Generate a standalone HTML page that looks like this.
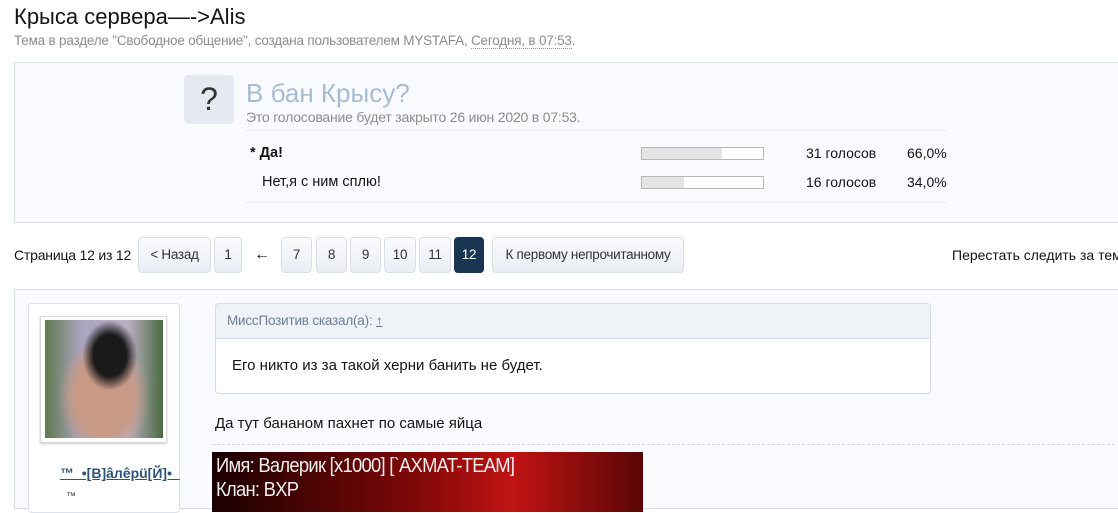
<!DOCTYPE html>
<html><head><meta charset="utf-8"><style>
*{margin:0;padding:0;box-sizing:border-box}
body{width:1118px;height:505px;overflow:hidden;background:#fff;font-family:"Liberation Sans",sans-serif;font-size:13.5px;color:#141414;position:relative}
.a{position:absolute;white-space:nowrap}
.btn{position:absolute;top:237px;height:36px;border:1px solid #d7dfe8;border-radius:4px;background:linear-gradient(#fafbfd,#e9eef4);color:#333;text-align:center;line-height:34px;font-size:13.5px;letter-spacing:-0.3px}
.bar{position:absolute;left:641px;width:123px;height:13px;border:1px solid #b8b8b8;background:#fff}
.bar i{display:block;height:100%;background:#e4e4e4}
</style></head><body>
<div class="a" style="left:14px;top:4px;font-size:22px;color:#141414">Крыса сервера—-&gt;Alis</div>
<div class="a" style="left:14px;top:33px;font-size:13.5px;letter-spacing:-0.2px;color:#8c8c8c">Тема в разделе "Свободное общение", создана пользователем MYSTAFA, <span style="border-bottom:1px dotted #999">Сегодня, в 07:53</span>.</div>

<div class="a" style="left:14px;top:62px;width:1110px;height:161px;background:#f9fafd;border:1px solid #d6dfe9"></div>
<div class="a" style="left:184px;top:75px;width:50px;height:49px;background:#e4e9f2;border-radius:5px;text-align:center;font-size:32px;line-height:49px;color:#333">?</div>
<div class="a" style="left:246px;top:78px;font-size:26px;color:#a7bcd3">В бан Крысу?</div>
<div class="a" style="left:246px;top:109px;font-size:14px;letter-spacing:-0.2px;color:#8c8c8c">Это голосование будет закрыто 26 июн 2020 в 07:53.</div>
<div class="a" style="left:246px;top:130px;width:700px;height:1px;background:#e6eaf0"></div>
<div class="a" style="left:246px;top:202px;width:700px;height:1px;background:#e6eaf0"></div>
<div class="a" style="left:250px;top:145px;font-weight:bold;font-size:14.5px">* Да!</div>
<div class="a" style="left:262px;top:174px;font-size:14.5px">Нет,я с ним сплю!</div>
<div class="bar" style="top:147px"><i style="width:80px"></i></div>
<div class="bar" style="top:176px"><i style="width:42px"></i></div>
<div class="a" style="left:806px;top:145px;font-size:14px">31 голосов</div>
<div class="a" style="left:907px;top:145px;font-size:14px">66,0%</div>
<div class="a" style="left:806px;top:174px;font-size:14px">16 голосов</div>
<div class="a" style="left:907px;top:174px;font-size:14px">34,0%</div>

<div class="a" style="left:14px;top:247px;font-size:14px;letter-spacing:-0.2px">Страница 12 из 12</div>
<div class="btn" style="left:138px;width:73px">&lt; Назад</div>
<div class="btn" style="left:214px;width:28px">1</div>
<div class="a" style="left:254px;top:246px;font-size:16px">←</div>
<div class="btn" style="left:281px;width:31px">7</div>
<div class="btn" style="left:316px;width:31px">8</div>
<div class="btn" style="left:350px;width:31px">9</div>
<div class="btn" style="left:384px;width:32px">10</div>
<div class="btn" style="left:419px;width:32px">11</div>
<div class="btn" style="left:454px;width:30px;background:#183651;border-color:#183651;color:#fff">12</div>
<div class="btn" style="left:492px;width:192px">К первому непрочитанному</div>
<div class="a" style="left:952px;top:247px;font-size:14px">Перестать следить за темой</div>

<div class="a" style="left:14px;top:289px;width:1110px;height:220px;background:#f9fafd;border:1px solid #d6dfe9"></div>
<div class="a" style="left:28px;top:303px;width:152px;height:210px;background:#fff;border:1px solid #dbe2ea;border-radius:4px"></div>
<div class="a" style="left:40px;top:316px;width:127px;height:127px;background:#fff;border:1px solid #d8d8d8;box-shadow:0 1px 2px #ccc"></div>
<div class="a" style="left:45px;top:320px;width:118px;height:118px;background:radial-gradient(ellipse at 55% 30%,#1a1a1a 0 18%,transparent 30%),radial-gradient(ellipse at 50% 65%,#c89a86 0 35%,transparent 55%),linear-gradient(90deg,#5f7a4f,#a9a3bd 30%,#bcb1c7 70%,#4a6a3f)"></div>
<div class="a" style="left:60px;top:465px;font-size:14px;font-weight:bold;color:#2f5477;text-decoration:underline">™ &nbsp;•[В]âлêрü[Й]• &nbsp;</div>
<div class="a" style="left:66px;top:491px;font-size:10px;color:#444">™</div>

<div class="a" style="left:215px;top:303px;width:716px;height:91px;background:#fff;border:1px solid #d3dce7;border-radius:4px;overflow:hidden">
<div style="height:35px;background:#eff2f7;border-bottom:1px solid #d3dce7;padding:9px 0 0 11px;color:#6b7f99;font-size:13.5px;letter-spacing:-0.2px">МиссПозитив сказал(а): <u>↑</u></div>
<div style="padding:18px 0 0 16px;font-size:15px">Его никто из за такой херни банить не будет.</div>
</div>
<div class="a" style="left:215px;top:415px;font-size:15px">Да тут бананом пахнет по самые яйца</div>
<div class="a" style="left:212px;top:444px;width:903px;border-top:1px dashed #d0d4da"></div>
<div class="a" style="left:212px;top:452px;width:431px;height:60px;background:linear-gradient(90deg,#1a0000,#7a0707 45%,#c01313 70%,#5a0505)"></div>
<div class="a" style="left:216px;top:454px;font-size:20px;color:#eee;letter-spacing:-0.8px;line-height:24px;transform:scaleX(0.92);transform-origin:left">Имя: Валерик [x1000] [`AXMAT-TEAM]<br>Клан: BXP</div>
</body></html>
